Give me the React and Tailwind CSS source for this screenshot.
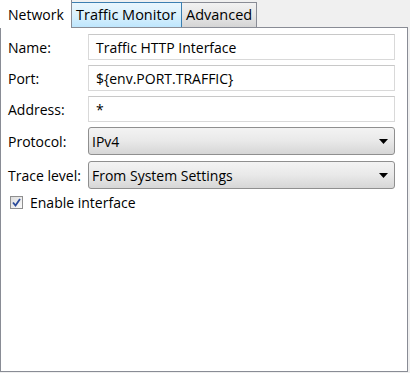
import React from 'react';

const font = { fontFamily: '"Open Sans", "Noto Sans", sans-serif' };

function TextRow({ label, value }) {
  return (
    <div className="flex items-center h-[26px]">
      <span className="w-[80px] text-[14px] text-black">{label}</span>
      <div className="flex-1 h-[26px] border border-[#d9d9d9] border-t-[#c8c8c8] bg-white flex items-center pl-[7px] text-[14px] text-black">
        {value}
      </div>
    </div>
  );
}

function SelectRow({ label, value }) {
  return (
    <div className="flex items-center h-[28px]">
      <span className="w-[80px] text-[14px] text-black whitespace-nowrap">{label}</span>
      <div className="flex-1 h-[28px] rounded-[3px] border border-[#8f8f8f] bg-gradient-to-b from-[#f3f3f3] via-[#e9e9e9] to-[#d6d6d6] flex items-center pl-[3px] pr-[6px] text-[14px] text-black">
        <span className="flex-1">{value}</span>
        <svg width="9" height="5" viewBox="0 0 9 5">
          <path d="M0 0 H9 L4.5 5 Z" fill="#000" />
        </svg>
      </div>
    </div>
  );
}

export default function App() {
  return (
    <div className="w-[410px] h-[373px] bg-[#f0f0f0] overflow-hidden" style={font}>
      <div className="w-[408px] h-[372px] flex flex-col">
        <div className="flex items-end h-[27px] shrink-0">
          <div className="w-[72px] h-[28px] -mb-px bg-white border-r border-[#898c95] flex items-center pl-[8px] text-[14px] text-black relative z-10">
            Network
          </div>
          <div className="w-[110px] h-[25px] border border-l-0 border-b-0 border-[#3c7fb1] bg-gradient-to-b from-[#eaf6fd] via-[#d9f0fc] to-[#bee6fd] flex items-center pl-[4px] text-[14.5px] text-black">
            Traffic Monitor
          </div>
          <div className="w-[75px] h-[25px] border border-l-0 border-b-0 border-[#898c95] bg-gradient-to-b from-[#f2f2f2] via-[#e6e6e6] to-[#d5d5d5] flex items-center pl-[4px] text-[14.5px] text-black">
            Advanced
          </div>
        </div>
        <div className="flex-1 bg-white border border-[#898c95] pt-[6px] pl-[7px] pr-[12px] flex flex-col">
          <div className="flex flex-col gap-[5px]">
            <TextRow label="Name:" value="Traffic HTTP Interface" />
            <TextRow label="Port:" value="${env.PORT.TRAFFIC}" />
            <TextRow label="Address:" value="*" />
          </div>
          <div className="flex flex-col gap-[6px] mt-[5px]">
            <SelectRow label="Protocol:" value="IPv4" />
            <SelectRow label="Trace level:" value="From System Settings" />
          </div>
          <label className="flex items-center mt-[3px] ml-[2px] gap-[7px] text-[14px] text-black">
            <span className="w-[13px] h-[13px] border border-[#8f8f8f] bg-gradient-to-br from-[#dcdcdc] to-[#fbfbfb] flex items-center justify-center">
              <svg width="9" height="9" viewBox="0 0 9 9">
                <path d="M1 4.5 L3.5 7.5 L8 1" fill="none" stroke="#2a4a9a" strokeWidth="1.8" />
              </svg>
            </span>
            Enable interface
          </label>
        </div>
      </div>
    </div>
  );
}
